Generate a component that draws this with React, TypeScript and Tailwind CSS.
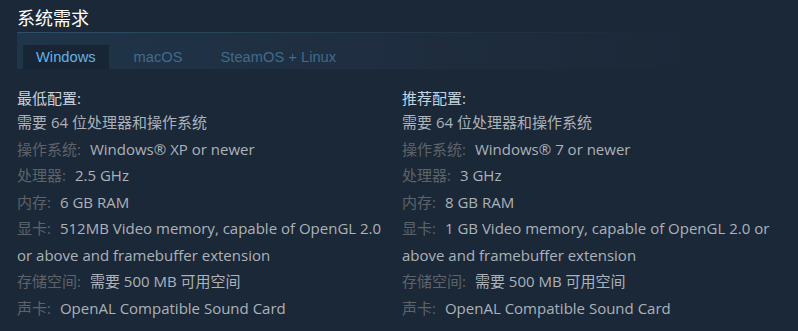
const MIN = [
  { label: "操作系统:", value: "Windows® XP or newer" },
  { label: "处理器:", value: "2.5 GHz" },
  { label: "内存:", value: "6 GB RAM" },
  {
    label: "显卡:",
    value: "512MB Video memory, capable of OpenGL 2.0 or above and framebuffer extension",
  },
  { label: "存储空间:", value: "需要 500 MB 可用空间" },
  { label: "声卡:", value: "OpenAL Compatible Sound Card" },
];

const REC = [
  { label: "操作系统:", value: "Windows® 7 or newer" },
  { label: "处理器:", value: "3 GHz" },
  { label: "内存:", value: "8 GB RAM" },
  {
    label: "显卡:",
    value: "1 GB Video memory, capable of OpenGL 2.0 or above and framebuffer extension",
  },
  { label: "存储空间:", value: "需要 500 MB 可用空间" },
  { label: "声卡:", value: "OpenAL Compatible Sound Card" },
];

const FONT = "font-['Open_Sans','Noto_Sans_CJK_SC',sans-serif]";

function Columna({ titulo, filas }: { titulo: string; filas: typeof MIN }) {
  return (
    <ul className="w-[378px] text-[15px] leading-[26.5px]">
      <li className="leading-[22px] text-[#c6d4df]">{titulo}</li>
      <li className="text-[#acb2b8]">需要 64 位处理器和操作系统</li>
      {filas.map((f) => (
        <li key={f.label} className="text-[#acb2b8]">
          <span className="mr-[9px] text-[#5e6369]">{f.label}</span>
          {f.value}
        </li>
      ))}
    </ul>
  );
}

export default function App() {
  return (
    <div className={`h-[331px] w-[798px] overflow-hidden bg-[#1b2838] ${FONT}`}>
      <h2 className="pl-[17px] pt-[5px] text-[18px] leading-[26px] text-white">
        系统需求
      </h2>

      <div className="ml-[17px] mr-[93px] mt-[1px] h-px bg-gradient-to-r from-[#2f5069] via-[#243a4d] to-transparent" />
      <div className="ml-[17px] mr-[93px] flex h-[36px] items-end bg-gradient-to-r from-[#1f3549] via-[#1f2e40] to-[#1b2838] pl-[6px] font-['Liberation_Sans',sans-serif] text-[14.7px]">
        <div className="flex h-[24px] items-center bg-[#172534] px-[13px] text-[#66b3e2]">
          Windows
        </div>
        <div className="ml-[25px] flex h-[24px] items-center text-[#3f6b8c]">
          macOS
        </div>
        <div className="ml-[38px] flex h-[24px] items-center text-[#3f6b8c]">
          SteamOS + Linux
        </div>
      </div>

      <div className="flex gap-[7px] pl-[17px] pt-[18px]">
        <Columna titulo="最低配置:" filas={MIN} />
        <Columna titulo="推荐配置:" filas={REC} />
      </div>
    </div>
  );
}
